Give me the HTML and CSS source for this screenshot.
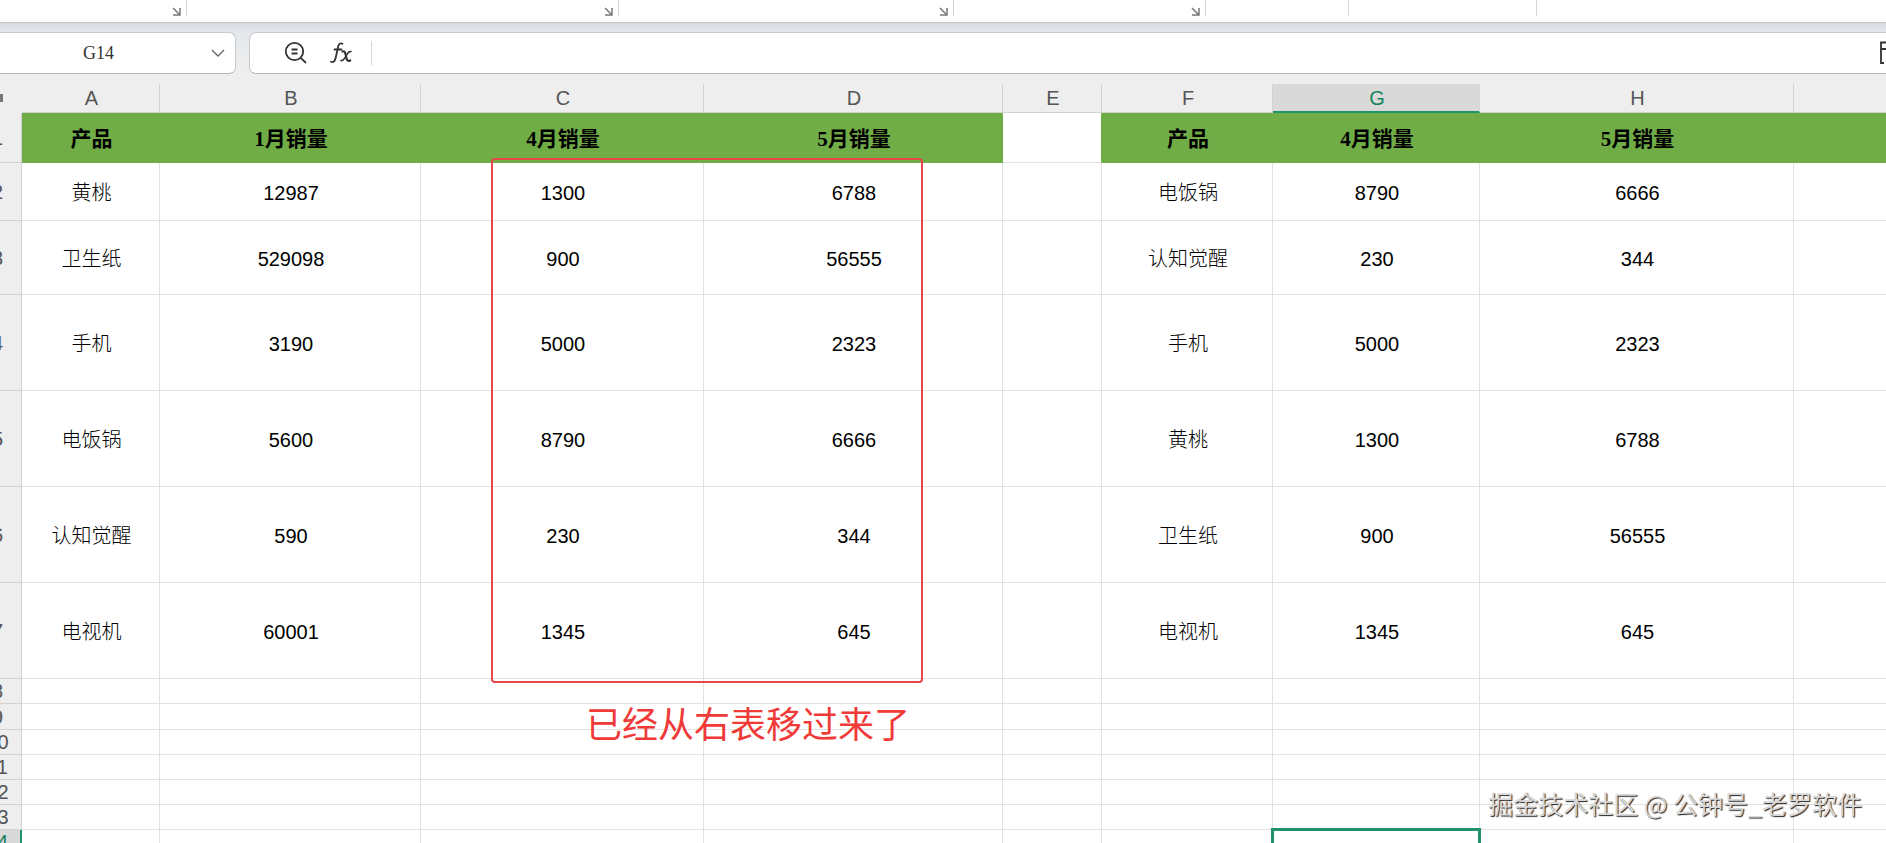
FILE: index.html
```html
<!DOCTYPE html>
<html lang="zh-CN">
<head>
    <meta charset="UTF-8">
    <meta name="viewport" content="width=device-width, initial-scale=1.0">
    <title>销量表</title>
    <link rel="stylesheet" href="styles.css">
</head>
<body>
    <svg class="symbols" aria-hidden="true">
        <symbol id="launcher" viewBox="0 0 9 9">
            <path d="M1 1l6 6M8 1v7H1" fill="none" stroke="currentColor" stroke-width="1.5"/>
        </symbol>
    </svg>

    <div class="ribbon">
        <div class="group g1"><button aria-label="更多"><svg><use href="#launcher"/></svg></button></div>
        <div class="group g2"><button aria-label="更多"><svg><use href="#launcher"/></svg></button></div>
        <div class="group g3"><button aria-label="更多"><svg><use href="#launcher"/></svg></button></div>
        <div class="group g4"><button aria-label="更多"><svg><use href="#launcher"/></svg></button></div>
        <div class="group g5"></div>
        <div class="group g6"></div>
    </div>

    <div class="formula-row">
        <div class="name-box">
            <input type="text" value="G14" aria-label="名称框">
            <button aria-label="展开">
                <svg width="14" height="8" viewBox="0 0 14 8"><path d="M1 1l6 6 6-6" fill="none" stroke="currentColor" stroke-width="1.4"/></svg>
            </button>
        </div>
        <div class="formula-bar">
            <button class="zoom" aria-label="查找">
                <svg width="24" height="24" viewBox="0 0 24 24" fill="none" stroke="currentColor" stroke-width="1.8">
                    <circle cx="10.5" cy="10.5" r="8.7"/>
                    <path d="M7.5 8.5h6M7.5 12.5h6M16.8 16.8l5.200 5.200"/>
                </svg>
            </button>
            <button class="fx" aria-label="插入函数">
                <svg width="24" height="24" viewBox="0 0 24 24" fill="none" stroke="currentColor" stroke-linecap="round">
                    <path d="M13.500 2.800c-1.600-1-3.500-.4-4.200 2.200L6.500 17.500c-.7 3-2.300 4.200-4.500 3.200M5.500 8.500h7" stroke-width="1.800"/>
                    <path d="M13.500 10.500c2-.6 2.700.5 3.300 3.500l.6 3c.5 2.800 1.700 3.500 3.800 2.500" stroke-width="2.200"/>
                    <path d="M22 10.500c-2.200-.4-3.300 1.200-4.700 4s-2.800 5.700-5.300 5" stroke-width="1.600"/>
                </svg>
            </button>
            <input type="text" aria-label="编辑栏">
            <svg class="expand" width="6" height="24" viewBox="0 0 6 24"><path d="M6 1.500H1v20.500h3M1 8h5" fill="none" stroke="currentColor" stroke-width="1.800"/></svg>
        </div>
    </div>

    <div class="sheet">
        <table>
            <colgroup>
                <col class="col-head"><col class="col-a"><col class="col-b"><col class="col-c"><col class="col-d"><col class="col-e"><col class="col-f"><col class="col-g"><col class="col-h"><col>
            </colgroup>
            <thead>
                <tr><th class="corner"><span></span></th><th>A</th><th>B</th><th>C</th><th>D</th><th>E</th><th>F</th><th class="current">G</th><th>H</th><th></th></tr>
            </thead>
            <tbody>
                <tr class="title"><th>1</th><td>产品</td><td>1月销量</td><td>4月销量</td><td>5月销量</td><td class="blank"></td><td>产品</td><td>4月销量</td><td>5月销量</td><td></td></tr>
                <tr class="h58"><th>2</th><td>黄桃</td><td>12987</td><td>1300</td><td>6788</td><td></td><td>电饭锅</td><td>8790</td><td>6666</td><td></td></tr>
                <tr class="h74"><th>3</th><td>卫生纸</td><td>529098</td><td>900</td><td>56555</td><td></td><td>认知觉醒</td><td>230</td><td>344</td><td></td></tr>
                <tr class="h96"><th>4</th><td>手机</td><td>3190</td><td>5000</td><td>2323</td><td></td><td>手机</td><td>5000</td><td>2323</td><td></td></tr>
                <tr class="h96"><th>5</th><td>电饭锅</td><td>5600</td><td>8790</td><td>6666</td><td></td><td>黄桃</td><td>1300</td><td>6788</td><td></td></tr>
                <tr class="h96"><th>6</th><td>认知觉醒</td><td>590</td><td>230</td><td>344</td><td></td><td>卫生纸</td><td>900</td><td>56555</td><td></td></tr>
                <tr class="h96"><th>7</th><td>电视机</td><td>60001</td><td>1345</td><td>645</td><td></td><td>电视机</td><td>1345</td><td>645</td><td></td></tr>
                <tr><th>8</th><td></td><td></td><td></td><td></td><td></td><td></td><td></td><td></td><td></td></tr>
                <tr class="h26"><th>9</th><td></td><td></td><td></td><td></td><td></td><td></td><td></td><td></td><td></td></tr>
                <tr><th>10</th><td></td><td></td><td></td><td></td><td></td><td></td><td></td><td></td><td></td></tr>
                <tr><th>11</th><td></td><td></td><td></td><td></td><td></td><td></td><td></td><td></td><td></td></tr>
                <tr><th>12</th><td></td><td></td><td></td><td></td><td></td><td></td><td></td><td></td><td></td></tr>
                <tr><th>13</th><td></td><td></td><td></td><td></td><td></td><td></td><td></td><td></td><td></td></tr>
                <tr><th class="current">14</th><td></td><td></td><td></td><td></td><td></td><td></td><td class="selected"></td><td></td><td></td></tr>
            </tbody>
        </table>
        <div class="mark-box"></div>
        <div class="mark-text">已经从右表移过来了</div>
    </div>

    <div class="watermark">掘金技术社区 @ 公钟号_老罗软件</div>
</body>
</html>
```

FILE: styles.css
```css
* {
    box-sizing: border-box;
}

body {
    margin: 0;
    height: 100vh;
    overflow: hidden;
    display: flex;
    flex-direction: column;
    background: #eee;
    font-family: "Liberation Sans", "Noto Sans CJK SC", sans-serif;
    font-size: 20px;
    color: #000;
}

button {
    border: 0;
    padding: 0;
    background: none;
    color: #333;
    display: flex;
}

input {
    border: 0;
    padding: 0;
    min-width: 0;
    background: none;
    outline: none;
}

.symbols {
    position: absolute;
    width: 0;
    height: 0;
}

/* ribbon */
.ribbon {
    flex: none;
    display: flex;
    height: 23px;
    background: #fff;
    border-bottom: 1px solid #c3c6cb;
}

.group {
    height: 16px;
    border-right: 1px solid #d4d4d4;
    display: flex;
    justify-content: flex-end;
    align-items: flex-end;
    padding-right: 5px;
}

.group svg {
    width: 9px;
    height: 9px;
    color: #777;
}

.g1 { width: 187px; }
.g2 { width: 432px; }
.g3 { width: 335px; }
.g4 { width: 252px; }
.g5 { width: 143px; }
.g6 { width: 188px; }

/* name box and formula bar */
.formula-row {
    flex: none;
    display: flex;
    gap: 13px;
    height: 61px;
    padding: 9px 0 10px;
    background: linear-gradient(#d6dadf, #e4e8ec 9px, #eee 50px);
}

.name-box,
.formula-bar {
    display: flex;
    align-items: center;
    background: #fff;
    border: 1px solid #c6c9cd;
    border-bottom-color: #b4b4b4;
}

.name-box {
    width: 236px;
    border-left: 0;
    border-radius: 0 7px 7px 0;
}

.name-box input {
    width: 197px;
    margin-right: 14px;
    text-align: center;
    font-family: "Liberation Serif", serif;
    font-size: 18px;
    color: #333;
}

.name-box button {
    color: #666;
}

.formula-bar {
    flex: 1;
    border-right: 0;
    border-radius: 7px 0 0 7px;
    padding-left: 34px;
}

.fx {
    margin-left: 21px;
}

.formula-bar input {
    flex: 1;
    height: 24px;
    margin-left: 18px;
    border-left: 1px solid #d4d4d4;
}

.expand {
    color: #333;
}

/* grid */
.sheet {
    position: relative;
    flex: 1;
    min-height: 0;
    overflow: hidden;
}

/* the row numbers are scrolled partly out of view */
table {
    width: calc(100% + 26px);
    margin-left: -26px;
    table-layout: fixed;
    border-collapse: separate;
    border-spacing: 0;
    background: #fff;
}

.col-head { width: 48px; }
.col-a { width: 138px; }
.col-b { width: 261px; }
.col-c { width: 283px; }
.col-d { width: 299px; }
.col-e { width: 99px; }
.col-f { width: 171px; }
.col-g { width: 207px; }
.col-h { width: 314px; }

tr {
    height: 25px;
}

th,
td {
    padding: 0;
    border-right: 1px solid #e2e2e2;
    border-bottom: 1px solid #e2e2e2;
    text-align: center;
    line-height: 24px;
}

td {
    font-weight: 300;
}

tbody tr:not(.h26) td:not(:empty) {
    padding: 2px 0 0 2px;
}

thead th {
    padding-left: 2px;
}

th {
    background: #eee;
    border-color: #d2d2d2;
    font-weight: normal;
    color: #555;
}

th:last-child,
td:last-child {
    border-right: 0;
}

thead tr {
    height: 29px;
}

thead .corner {
    padding: 0;
    border-color: #eee;
}

.corner span {
    display: block;
    width: 8px;
    height: 8px;
    margin-left: 21px;
    background: #777;
}

thead .current {
    background: #d9d9d9;
    border-right-color: #d9d9d9;
    border-bottom: 2px solid #1f9468;
    color: #17845b;
}

tbody .current {
    background: #d9d9d9;
    border-right: 2px solid #1f9468;
    color: #17845b;
}

.title {
    height: 50px;
}

.title td {
    background: #70ad47;
    border-color: #70ad47;
    font-family: "Liberation Serif", "Noto Sans CJK SC", serif;
    font-size: 21px;
    font-weight: bold;
}

.title .blank {
    background: #fff;
    border-right-color: #70ad47;
    border-bottom-color: #e2e2e2;
}

.h26 { height: 26px; }
.h58 { height: 58px; }
.h74 { height: 74px; }
.h96 { height: 96px; }

.selected {
    position: relative;
}

.selected::after {
    content: "";
    position: absolute;
    inset: -2px -2px -2px -2px;
    border: 3px solid #1f9468;
}

.mark-box {
    position: absolute;
    left: 491px;
    top: 74px;
    width: 432px;
    height: 525px;
    border: 2px solid #e5484a;
    border-radius: 4px;
}

.mark-text {
    position: absolute;
    left: 586px;
    top: 622px;
    font-size: 36px;
    line-height: 40px;
    white-space: nowrap;
    color: #f03a38;
}

.watermark {
    position: absolute;
    right: 24px;
    bottom: 22px;
    font-family: "Noto Sans CJK SC", sans-serif;
    font-size: 25px;
    line-height: 36px;
    white-space: nowrap;
    color: #d8d8d8;
    text-shadow: 1px 1px 1px #222;
}
```
